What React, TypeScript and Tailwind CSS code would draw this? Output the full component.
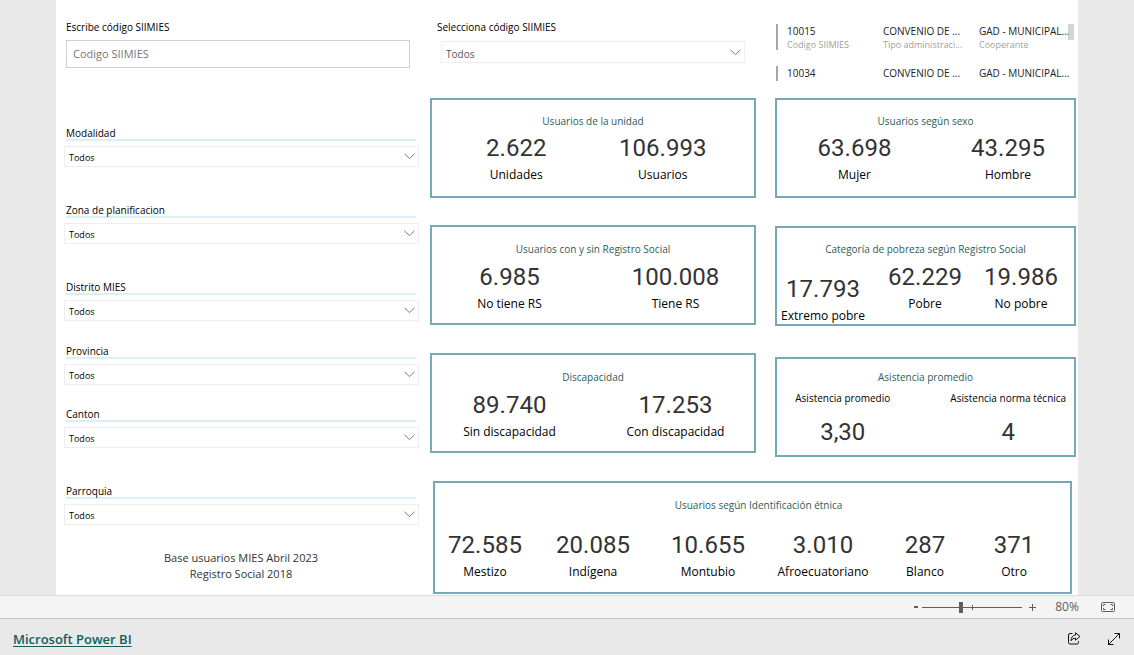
import clsx from "clsx";
import { useState } from "react";

const filters = [
    { id: "modalidad", label: "Modalidad", space: "mt-[57px]" },
    { id: "zona", label: "Zona de planificacion", space: "mt-[35px]" },
    { id: "distrito", label: "Distrito MIES", space: "mt-[35px]" },
    { id: "provincia", label: "Provincia", space: "mt-[22px]" },
    { id: "canton", label: "Canton", space: "mt-[21px]" },
    { id: "parroquia", label: "Parroquia", space: "mt-[35px]" },
];

const units = [
    { code: "10015", type: "CONVENIO DE ...", partner: "GAD - MUNICIPAL..." },
    { code: "10034", type: "CONVENIO DE ...", partner: "GAD - MUNICIPAL..." },
];

const ethnicGroups = [
    { value: "72.585", label: "Mestizo" },
    { value: "20.085", label: "Indígena" },
    { value: "10.655", label: "Montubio" },
    { value: "3.010", label: "Afroecuatoriano" },
    { value: "287", label: "Blanco" },
    { value: "371", label: "Otro" },
];

function Chevron({ className }: { className?: string }) {
    return (
        <svg
            className={clsx("pointer-events-none absolute", className)}
            width="11"
            height="7"
            viewBox="0 0 11 7"
            fill="none"
            stroke="#777"
        >
            <path d="M0.5 0.8 5.5 5.6 10.5 0.8" />
        </svg>
    );
}

function Filter({ id, label, space }: { id: string; label: string; space: string }) {
    return (
        <div className={clsx("pl-2 pr-[11px]", space)}>
            <label
                htmlFor={id}
                className="ml-0.5 mr-[3px] block border-b-2 border-[#d8f0f6] pt-[2px] text-[10px] leading-3 text-black"
            >
                {label}
            </label>
            <div className="relative mt-[5px]">
                <select
                    id={id}
                    className="block h-[21px] w-full appearance-none border border-[#eee] bg-white px-1 pt-[3px] text-[9px] text-black"
                >
                    <option>Todos</option>
                </select>
                <Chevron className="right-1 top-[7px]" />
            </div>
        </div>
    );
}

function Card({ title, className, titleClass, children }) {
    return (
        <section className={clsx("border-2 border-[#76a9b8]", className)}>
            <h2
                className={clsx(
                    "text-center text-[10px] leading-4 text-[#2f5c59]",
                    titleClass
                )}
            >
                {title}
            </h2>
            {children}
        </section>
    );
}

function Stat({ value, label, className }: { value: string; label: string; className?: string }) {
    return (
        <div className={clsx("text-center whitespace-nowrap", className)}>
            <p className="font-[Roboto,sans-serif] text-[24px] leading-7 text-[#333]">{value}</p>
            <p className="mt-[3px] text-[12px] leading-5 text-black">{label}</p>
        </div>
    );
}

function UnitList() {
    return (
        <div className="relative h-[98px] pl-px pt-6 text-[10px] text-[#222]">
            <div className="grid grid-cols-[96fr_96fr_97fr] whitespace-nowrap border-l-2 border-[#a6a6a6] pl-[9px]">
                {[
                    [units[0].code, "Codigo SIIMIES"],
                    [units[0].type, "Tipo administraci..."],
                    [units[0].partner, "Cooperante"],
                ].map(([value, caption]) => (
                    <div key={caption} className="h-[26px]">
                        <p className="leading-[14px]">{value}</p>
                        <p className="text-[9px] leading-[13px] text-[#a0a0a0]">{caption}</p>
                    </div>
                ))}
            </div>
            <div className="mt-4 grid grid-cols-[96fr_96fr_97fr] whitespace-nowrap border-l-2 border-[#a6a6a6] pl-[9px] leading-[15px]">
                <p>{units[1].code}</p>
                <p>{units[1].type}</p>
                <p>{units[1].partner}</p>
            </div>
            <div className="absolute right-[2px] top-6 h-4 w-[6px] bg-[#aaa]/50" />
        </div>
    );
}

function ZoomBar() {
    const [zoom, setZoom] = useState(80);

    return (
        <div className="flex h-6 items-center justify-end border-y border-t-[#dcdcdc] border-b-[#c4c4c4] bg-[#f4f4f4] pr-[19px] text-[#605e5c]">
            <button
                aria-label="Alejar"
                className="flex h-4 w-3 items-center justify-center"
                onClick={() => setZoom(zoom - 10)}
            >
                <span className="h-[2px] w-1 bg-[#605e5c]" />
            </button>
            <div className="relative flex w-[100px] items-center">
                <input
                    type="range"
                    aria-label="Zoom"
                    min={10}
                    max={190}
                    value={zoom}
                    onChange={(e) => setZoom(Number(e.target.value))}
                    className="h-3 w-full appearance-none bg-transparent [&::-webkit-slider-runnable-track]:h-px [&::-webkit-slider-runnable-track]:bg-[#605e5c] [&::-webkit-slider-thumb]:-mt-[5px] [&::-webkit-slider-thumb]:h-[11px] [&::-webkit-slider-thumb]:w-1 [&::-webkit-slider-thumb]:appearance-none [&::-webkit-slider-thumb]:bg-[#605e5c]"
                />
                <span className="pointer-events-none absolute left-1/2 top-1 h-[5px] w-px bg-[#605e5c]" />
            </div>
            <button
                aria-label="Acercar"
                className="ml-[6px] flex h-4 w-2 items-center justify-center"
                onClick={() => setZoom(zoom + 10)}
            >
                <svg width="7" height="7" viewBox="0 0 7 7" stroke="#605e5c">
                    <path d="M0 3.5h7M3.5 0v7" />
                </svg>
            </button>
            <span className="ml-[18px] w-[26px] text-center text-[12px] leading-4">{zoom}%</span>
            <button aria-label="Ajustar a la página" className="ml-[21px]">
                <svg width="14" height="10" viewBox="0 0 14 10" fill="none" stroke="#605e5c">
                    <rect x="0.5" y="0.5" width="13" height="9" rx="1" />
                    <path d="M4.5 2.5H2.5V4M2.5 6V7.5H4.5M9.5 2.5H11.5V4M11.5 6V7.5H9.5" />
                </svg>
            </button>
        </div>
    );
}

function Footer() {
    return (
        <footer className="flex h-9 items-center bg-[#e9e9e9] px-[13px] pt-1">
            <a
                href="#"
                className="text-[13px] font-semibold leading-5 text-[#0f5f5a] underline underline-offset-2"
            >
                Microsoft Power BI
            </a>
            <button aria-label="Compartir" className="ml-auto">
                <svg width="14" height="14" viewBox="0 0 14 14" fill="none" stroke="#111">
                    <path d="M5.5 1.5H3Q1.5 1.5 1.5 3V10.5Q1.5 12 3 12H10Q11.5 12 11.5 10.5V9" />
                    <path d="M8.5 0.8 13 4.5 8.5 8.2V6.2Q5.5 6 4 8.8Q4.2 3.6 8.5 3Z" strokeLinejoin="round" />
                </svg>
            </button>
            <button aria-label="Pantalla completa" className="ml-[26px]">
                <svg width="14" height="14" viewBox="0 0 14 14" fill="none" stroke="#111">
                    <path d="M1.5 12.5 12.5 1.5M7.5 1.5h5v5M1.5 7.5v5h5" />
                </svg>
            </button>
        </footer>
    );
}

export default function App() {
    return (
        <div className="flex min-h-screen flex-col font-['Open_Sans','Noto_Sans',sans-serif]">
            <main className="flex grow bg-[#e9e9e9] px-14">
                <div className="flex grow bg-white pr-[2px]">
                    <aside className="w-0 grow-[374]">
                        <div className="pl-[10px] pr-5 pt-5">
                            <label htmlFor="codigo" className="block text-[10px] leading-[14px] text-black">
                                Escribe código SIIMIES
                            </label>
                            <input
                                id="codigo"
                                type="text"
                                placeholder="Codigo SIIMIES"
                                className="mt-[6px] block h-7 w-full border border-[#d0d0d0] px-[6px] pb-px text-[11px] placeholder:text-[#777]"
                            />
                        </div>
                        {filters.map((f) => (
                            <Filter key={f.id} {...f} />
                        ))}
                        <p className="mt-[25px] pr-1 text-center text-[11px] leading-4 text-[#333]">
                            Base usuarios MIES Abril 2023
                            <br />
                            Registro Social 2018
                        </p>
                    </aside>

                    <div className="w-0 grow-[646]">
                        <div className="flex gap-[19px]">
                            <div className="w-0 grow-[326]">
                                <div className="h-[98px] pl-[7px] pr-[11px] pt-5">
                                    <label htmlFor="selCodigo" className="block text-[10px] leading-[14px] text-black">
                                        Selecciona código SIIMIES
                                    </label>
                                    <div className="relative ml-1 mt-[7px]">
                                        <select
                                            id="selCodigo"
                                            className="block h-[22px] w-full appearance-none border border-[#eee] bg-white px-1 pt-1 text-[10px] text-[#555]"
                                        >
                                            <option>Todos</option>
                                        </select>
                                        <Chevron className="right-1 top-2" />
                                    </div>
                                </div>
                                <Card title="Usuarios de la unidad" className="h-[100px] pt-[13px]">
                                    <div className="mt-[5px] grid grid-cols-2 pl-[11px] pr-[18px]">
                                        <Stat value="2.622" label="Unidades" />
                                        <Stat value="106.993" label="Usuarios" />
                                    </div>
                                </Card>
                                <Card title="Usuarios con y sin Registro Social" className="mt-[27px] h-[100px] pt-[14px]">
                                    <div className="mt-[6px] grid grid-cols-[155fr_157fr] gap-2.5">
                                        <Stat value="6.985" label="No tiene RS" />
                                        <Stat value="100.008" label="Tiene RS" />
                                    </div>
                                </Card>
                                <Card title="Discapacidad" className="mt-7 h-[100px] pt-[14px]">
                                    <div className="mt-[6px] grid grid-cols-[155fr_157fr] gap-2.5">
                                        <Stat value="89.740" label="Sin discapacidad" />
                                        <Stat value="17.253" label="Con discapacidad" />
                                    </div>
                                </Card>
                            </div>

                            <div className="w-0 grow-[301]">
                                <UnitList />
                                <Card title="Usuarios según sexo" className="h-[100px] pt-[13px]">
                                    <div className="mt-[5px] grid grid-cols-[155fr_132fr] gap-2.5">
                                        <Stat value="63.698" label="Mujer" />
                                        <Stat value="43.295" label="Hombre" />
                                    </div>
                                </Card>
                                <Card title="Categoría de pobreza según Registro Social" className="mt-7 h-[100px] pt-[13px]">
                                    <div className="mt-[6px] grid grid-cols-[92fr_112fr_80fr] pr-[13px]">
                                        <Stat value="17.793" label="Extremo pobre" className="pt-3" />
                                        <Stat value="62.229" label="Pobre" />
                                        <Stat value="19.986" label="No pobre" />
                                    </div>
                                </Card>
                                <Card title="Asistencia promedio" className="mt-[31px] h-[100px] pt-[10px]">
                                    <div className="mt-[5px] grid grid-cols-2 gap-[34px] whitespace-nowrap text-center">
                                        {[
                                            ["Asistencia promedio", "3,30"],
                                            ["Asistencia norma técnica", "4"],
                                        ].map(([label, value]) => (
                                            <div key={label}>
                                                <p className="text-[10px] leading-4 text-black">{label}</p>
                                                <p className="mt-3 font-[Roboto,sans-serif] text-[24px] leading-7 text-[#333]">
                                                    {value}
                                                </p>
                                            </div>
                                        ))}
                                    </div>
                                </Card>
                            </div>
                        </div>

                        <Card
                            title="Usuarios según Identificación étnica"
                            className="ml-[3px] mr-1 mt-6 h-[113px] pt-[14px]"
                            titleClass="pl-3"
                        >
                            <div className="mt-[18px] grid grid-cols-[100fr_116fr_114fr_116fr_88fr_90fr] pr-[11px]">
                                {ethnicGroups.map((group) => (
                                    <Stat key={group.label} {...group} />
                                ))}
                            </div>
                        </Card>
                    </div>
                </div>
            </main>
            <ZoomBar />
            <Footer />
        </div>
    );
}
